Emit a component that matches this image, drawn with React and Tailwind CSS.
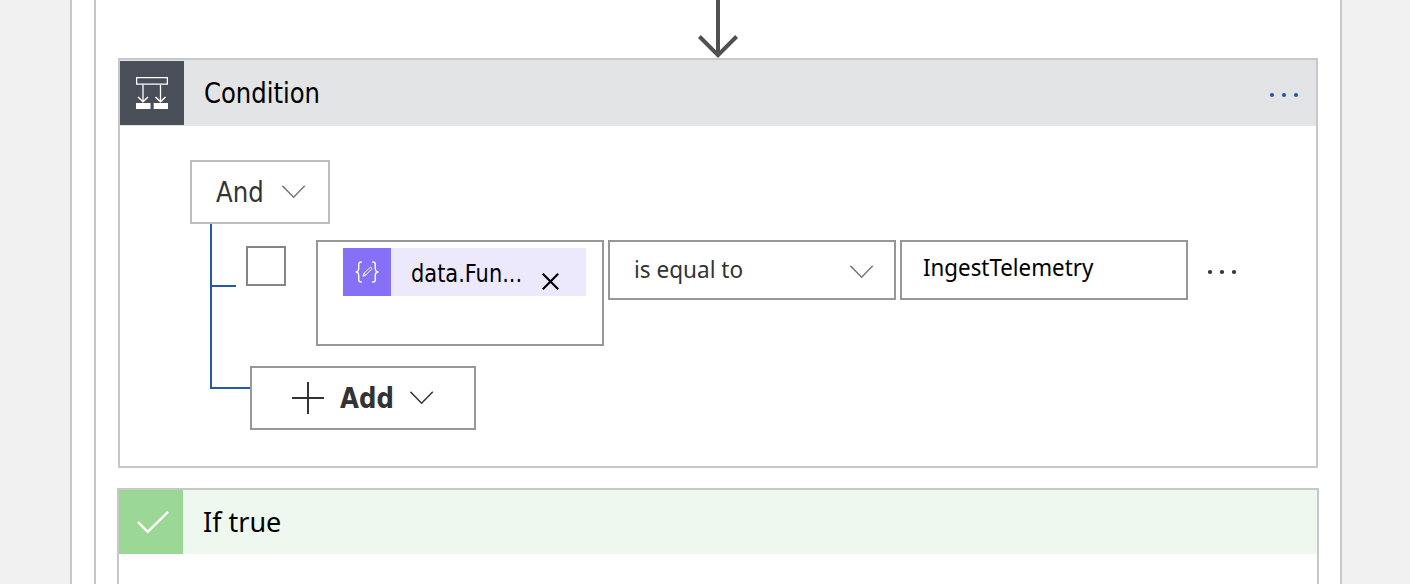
const Chevron = ({ className }) => (
  <svg className={className} width="24" height="14" viewBox="0 0 24 14" fill="none" stroke="currentColor" strokeWidth="1.5">
    <path d="M.4.8 11.6 12.2 22.8.8" />
  </svg>
);

const Dots = ({ className, label }) => (
  <button aria-label={label} className={className}>
    <svg width="30" height="6" viewBox="0 0 30 6" fill="currentColor">
      <circle cx="3" cy="3" r="2.1" />
      <circle cx="15" cy="3" r="2.1" />
      <circle cx="27" cy="3" r="2.1" />
    </svg>
  </button>
);

const ConditionIcon = () => (
  <svg width="32" height="32" viewBox="0 0 32 32" fill="none" stroke="white">
    <path d="M.6.6h30.8v6.6H.6z" strokeWidth="1.3" />
    <path d="M7 7.5v17M24.5 7.5v17" strokeWidth="1.3" />
    <path d="m2 20 5 4.7 5-4.7M19.5 20l5 4.7 5-4.7" strokeWidth="1.5" />
    <path d="M0 26h14.5v6H0zM17.7 26H32v6H17.7z" fill="white" stroke="none" />
  </svg>
);

const ExpressionIcon = () => (
  <svg width="24" height="22" viewBox="0 0 24 22" fill="none" stroke="white" strokeWidth="1.4">
    <path d="M6.8 1H6C4.3 1 3.7 1.9 3.7 3.3v4.3C3.7 9.7 2.6 11 .6 11c2 0 3.1 1.3 3.1 3.4v4.3C3.7 20.1 4.3 21 6 21h.8" />
    <path d="M17.2 1h.8c1.7 0 2.3.9 2.3 2.3v4.3c0 2.1 1.1 3.4 3.1 3.4-2 0-3.1 1.3-3.1 3.4v4.3c0 1.4-.6 2.3-2.3 2.3h-.8" />
    <path d="m8 15.3 1-3 5.6-5.6c.5-.5 1.2-.5 1.7 0s.5 1.2 0 1.7L10.8 14Zm1-3 1.8 1.7" strokeWidth="1" />
  </svg>
);

export default function App() {
  return (
    <div className="h-[584px] overflow-hidden bg-[#f1f1f1] pl-[70px] font-['Noto_Sans',sans-serif] text-black">
      <div className="h-full w-[1272px] border-x-2 border-[#c8c8c8] bg-white pl-[22px]">
        <div className="flex h-full flex-col border-l-2 border-[#c8c8c8] pl-[21px]">
          <div className="flex h-[58px] w-[1202px] shrink-0 justify-center">
            <svg width="40" height="58" viewBox="0 0 40 58" fill="none" stroke="#505050" strokeWidth="4">
              <path d="M20 0v54M1.4 36.5 20 55.1l18.6-18.6" />
            </svg>
          </div>

          <section className="ml-px flex h-[410px] w-[1200px] shrink-0 flex-col border-2 border-[#c8c8c8]">
            <header className="flex h-[66px] shrink-0 items-center bg-[#e3e4e6]">
              <div className="mb-px flex size-16 items-center justify-center bg-[#484f58]">
                <ConditionIcon />
              </div>
              <h2 className="mt-0.5 ml-5 origin-left scale-x-[0.965] font-['DejaVu_Sans_Condensed','DejaVu_Sans',sans-serif] text-[28px] leading-9 [font-stretch:condensed]">Condition</h2>
              <Dots label="Condition menu" className="mt-[3px] mr-[17px] ml-auto flex text-[#2259ab]" />
            </header>

            <div className="flex flex-col pt-[34px] pl-[70px]">
              <button className="flex h-16 w-[140px] items-center border-2 border-[#bebebe] pl-6 text-[#333]">
                <span className="mt-0.5 w-[66px] text-left font-['DejaVu_Sans_Condensed','DejaVu_Sans',sans-serif] text-[28px] leading-9 [font-stretch:condensed]">
                  <span className="inline-block origin-left scale-x-[0.97]">And</span>
                </span>
                <Chevron className="text-[#777]" />
              </button>

              <div className="flex">
                <div className="ml-5 h-[165px] w-10 border-b-2 border-l-2 border-[#2259ab] pt-[61px]">
                  <div className="h-0.5 w-6 bg-[#2259ab]" />
                </div>
                <div className="flex flex-col">
                  <div className="flex h-[142px] items-start pt-4">
                    <div className="mt-1.5 -ml-1 size-10 border-2 border-[#858585]" />
                    <div className="ml-[30px] h-[106px] w-[288px] border-2 border-[#979797] pt-1.5 pl-[25px]">
                      <div className="flex h-12 w-[243px] items-center bg-[#ede9fd]">
                        <div className="flex size-12 items-center justify-center bg-[#8670f8]">
                          <ExpressionIcon />
                        </div>
                        <span className="mt-1 ml-5 w-[131px] font-['DejaVu_Sans_Condensed','DejaVu_Sans',sans-serif] text-2xl [font-stretch:condensed]">
                          <span className="inline-block origin-left scale-x-[0.97]">data.Fun...</span>
                        </span>
                        <svg className="mt-[19px]" width="17" height="17" viewBox="0 0 17 17" fill="none" stroke="black" strokeWidth="2.2">
                          <path d="m.8.8 15.4 15.4M16.2.8.8 16.2" />
                        </svg>
                      </div>
                    </div>
                    <button className="ml-1 flex h-[60px] w-[288px] items-center justify-between border-2 border-[#979797] pr-5 pl-6 text-[#333]">
                      <span className="-mt-0.5 origin-left scale-x-[0.94] text-2xl">is equal to</span>
                      <Chevron className="mt-1 text-[#777]" />
                    </button>
                    <div className="ml-1 flex h-[60px] w-[288px] items-center border-2 border-[#979797] pl-[21px]">
                      <span className="-mt-1.5 origin-left scale-x-[0.93] text-2xl">IngestTelemetry</span>
                    </div>
                    <Dots label="Row menu" className="mt-[29px] ml-[19px] flex text-[#333]" />
                  </div>
                  <button className="flex h-16 w-[226px] items-center border-2 border-[#979797] pl-10 text-[#333]">
                    <svg width="32" height="32" viewBox="0 0 32 32" stroke="currentColor" strokeWidth="2">
                      <path d="M16 0v32M0 16h32" />
                    </svg>
                    <span className="mt-0.5 ml-4 w-[70px] text-left font-['DejaVu_Sans_Condensed','DejaVu_Sans',sans-serif] text-[28px] leading-9 font-bold [font-stretch:condensed]">
                      <span className="inline-block origin-left scale-x-[0.97]">Add</span>
                    </span>
                    <Chevron />
                  </button>
                </div>
              </div>
            </div>
          </section>

          <section className="mt-5 h-[120px] w-[1202px] shrink-0 border-2 border-[#c8c8c8]">
            <header className="flex h-16 items-center bg-[#eef8ef]">
              <div className="flex size-16 items-center justify-center bg-[#9bd795]">
                <svg className="ml-[3px]" width="32" height="23" viewBox="0 0 32 23" fill="none" stroke="white" strokeWidth="2.4">
                  <path d="m.9 11 9.8 9.8L31 .9" />
                </svg>
              </div>
              <h2 className="-mt-0.5 ml-5 origin-left scale-x-[0.965] text-[28px] leading-9">If true</h2>
            </header>
          </section>
        </div>
      </div>
    </div>
  );
}
